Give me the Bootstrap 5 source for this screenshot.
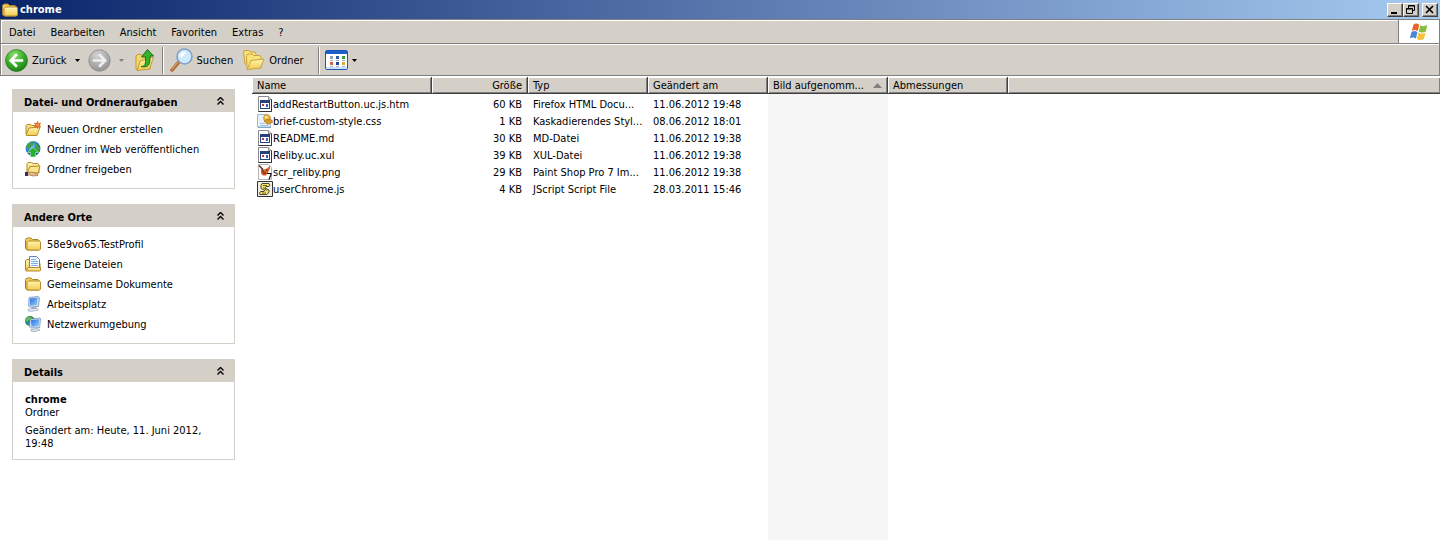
<!DOCTYPE html>
<html lang="de">
<head>
<meta charset="utf-8">
<meta name="viewport" content="width=device-width, initial-scale=1">
<title>chrome</title>
<link rel="stylesheet" href="https://cdn.jsdelivr.net/npm/bootstrap@5.3.0/dist/css/bootstrap.min.css">
<style>
  :root { --face: #d4d0c8; --shade: #808080; }
  body { font: 11px/13px Tahoma, "DejaVu Sans Condensed", "DejaVu Sans", sans-serif; color: #000; background: #fff; }
  button { font: inherit; color: inherit; background: none; border: 0; padding: 0; }
  a { color: inherit; text-decoration: none; }
  a:hover { text-decoration: underline; }
  svg { display: block; flex: none; }
  .titlebar { height: 19px; padding: 0 2px; color: #fff; background: linear-gradient(90deg, #0a246a, #a6caf0); }
  .titlebar h1 { font: inherit; font-weight: bold; margin: 0 0 0 2px; }
  .caption-btn { width: 16px; height: 14px; background: var(--face); border: 1px solid; border-color: #fff #404040 #404040 #fff; box-shadow: inset -1px -1px var(--shade); }
  .caption-btn:last-child { margin-left: 3px; }
  .bars { background: var(--face); border: 1px solid var(--shade); box-shadow: inset 1px 1px #fff; }
  .menubar { height: 24px; border-bottom: 1px solid var(--shade); }
  .menubar button { padding: 1px 7px 0 8px; }
  .flag { width: 41px; background: #fff; border-left: 1px solid var(--shade); }
  .tools { height: 31px; border-top: 1px solid #fff; padding-left: 4px; }
  .rule { width: 2px; height: 27px; margin: 0 5px 0 6px; border-left: 1px solid var(--shade); border-right: 1px solid #fff; }
  .tasks { width: 252px; padding: 13px 17px 13px 12px; gap: 15px; flex: none; }
  .panel { border: 1px solid var(--face); border-top: 0; }
  .panel-head { height: 23px; background: var(--face); padding: 0 10px 0 11px; }
  .panel-head h2 { font: inherit; font-weight: bold; }
  .panel-list { padding: 7px 12px 9px; }
  .panel-list a { height: 20px; gap: 6px; }
  .panel-info { padding: 11px 12px 9px; }
  .panel-info p { margin: 0; }
  .panel-info p:last-child { margin-top: 5px; }
  .files { padding-top: 1px; min-width: 0; background: linear-gradient(#f6f6f6, #f6f6f6) 516px 0 / 120px 100% no-repeat; }
  .grid { width: 100%; table-layout: fixed; border-collapse: separate; border-spacing: 0; }
  .grid th { height: 17px; padding: 1px 5px 0; font-weight: normal; background: var(--face); border-bottom: 1px solid #404040; border-right: 1px solid #404040; box-shadow: inset 1px 1px #fff, inset -1px -1px var(--shade); white-space: nowrap; }
  .grid th:last-child { border-right: 0; }
  .grid td { height: 17px; padding: 1px 0 0 5px; white-space: nowrap; }
  .grid td.text-end { padding-right: 6px; }
  .grid tbody tr:first-child td { height: 18px; padding-top: 2px; }
  .c-name { width: 180px; } .c-size { width: 96px; } .c-mid { width: 120px; }
</style>
<script src="https://cdn.jsdelivr.net/npm/bootstrap@5.3.0/dist/js/bootstrap.bundle.min.js"></script>
</head>
<body class="min-vh-100 d-flex flex-column">

<svg width="0" height="0" class="position-absolute" aria-hidden="true">
  <defs>
    <linearGradient id="gy" x1="0" y1="0" x2="0" y2="1"><stop offset="0" stop-color="#fff6b4"/><stop offset="1" stop-color="#f2cb4e"/></linearGradient>
    <radialGradient id="gg" cx=".4" cy=".25" r=".8"><stop offset="0" stop-color="#8fe070"/><stop offset=".55" stop-color="#3bab2c"/><stop offset="1" stop-color="#167a12"/></radialGradient>
    <radialGradient id="gr" cx=".4" cy=".25" r=".8"><stop offset="0" stop-color="#d2d2d2"/><stop offset="1" stop-color="#909090"/></radialGradient>
    <linearGradient id="gb" x1="0" y1="0" x2="1" y2="1"><stop offset="0" stop-color="#2c6fd8"/><stop offset="1" stop-color="#8fd0fb"/></linearGradient>
    <radialGradient id="gw" cx=".35" cy=".3" r=".8"><stop offset="0" stop-color="#8fd2f5"/><stop offset=".5" stop-color="#2b82c9"/><stop offset="1" stop-color="#0c4a8c"/></radialGradient>
    <symbol id="folder" viewBox="0 0 16 16">
      <path d="M.5 12.500V3.500L2 2h4l1.500 1.500H13L14.500 5v8L13.500 14H2z" fill="#f0cd5c" stroke="#a8802a"/>
      <path d="M2 6.500 3.500 5H14.500L15.500 6v7L14.500 14H3L2 13z" fill="url(#gy)" stroke="#b58c2d"/>
    </symbol>
    <symbol id="openfolder" viewBox="0 0 16 16">
      <path d="M1 13V4.500L2 3.500h3.500L7 4.500h5l.500 1V8z" fill="#f5dc80" stroke="#b58c2d"/>
      <path d="M1 14 4 7 15 6l-3 8.500H2z" fill="url(#gy)" stroke="#b58c2d"/>
    </symbol>
    <symbol id="newfolder" viewBox="0 0 16 16">
      <use href="#openfolder"/>
      <path d="M12.500.5 13.300 2.600 15.500 2.200 14.300 4 15.500 5.900 13.300 5.500 12.500 7.500 11.700 5.500 9.500 5.900 10.700 4 9.500 2.200 11.700 2.600z" fill="#f28a3c" stroke="#d95c1e" stroke-width=".8"/>
    </symbol>
    <symbol id="webfolder" viewBox="0 0 16 16">
      <circle cx="8" cy="7.500" r="7.400" fill="url(#gw)"/>
      <path d="M3 3c2-2 5-2.500 6-2 1 1-1 2-1 3S5 6 4 7.500 1 7 1.500 5zM11 3c2 0 3.500 2.500 4 4.500l-1 4-2-1c-1-2-2.500-3-1-4.500z" fill="#3f9f45"/>
      <path d="M8 6.500 13.500 11.500H10.500V16H5.500V11.500H2.500z" fill="#25b02e" stroke="#c5ecba" stroke-width=".6"/>
    </symbol>
    <symbol id="sharefolder" viewBox="0 0 16 16">
      <path d="M2 12V2.500L3 1.500h3.500L8 2.500h5l1 2V12z" fill="url(#gy)" stroke="#b58c2d"/>
      <path d="M2.500 11 5 5.500 15 5l-2 7H3z" fill="#fbe68e" stroke="#b58c2d"/>
      <path d="M0 11.500h3l4-.5 5 1.500 1 2-5 .5-4-1H0z" fill="#e8b98a" stroke="#8a5a35" stroke-width=".6"/>
      <path d="M0 11h3v4H0z" fill="#2a3560"/>
    </symbol>
    <symbol id="docfolder" viewBox="0 0 16 16">
      <path d="M.5 14V4.500L2 3.500h3v4h10v7H2z" fill="url(#gy)" stroke="#a8802a"/>
      <path d="M4.500.500h7l3 3v8h-10z" fill="#f2f8ff" stroke="#5f86b8"/>
      <path d="M6 3.500h5M6 5.500h7M6 7.500h7M6 9.500h7" stroke="#7fb2e0"/>
      <path d="M1 15 3 11.500h12.500v3l-1 .5z" fill="url(#gy)" stroke="#b58c2d"/>
    </symbol>
    <symbol id="pc" viewBox="0 0 16 16">
      <path d="M4 1.500 13 .5l1.500 1-1 9-9 .5-1-1z" fill="#c9dcf2" stroke="#7a97bd" stroke-width=".8"/>
      <path d="M4.800 2.500 12.500 1.800l-.8 7.200-6.700.5z" fill="url(#gb)"/>
      <path d="M7 11h4l1 2H6z" fill="#a6b5cc"/>
      <path d="M3.500 13 12 12.300l1.500 1.700L6 15.500 3 14.500z" fill="#e9eef6" stroke="#8090aa" stroke-width=".6"/>
    </symbol>
    <symbol id="net" viewBox="0 0 16 16">
      <circle cx="5" cy="5" r="4.900" fill="#1d7a3c"/><path d="M1 3c2-3 5-3 6-2L4 4 2 6 .5 5z" fill="#62c45a"/><path d="M1 6l3-1 1 4-2 0z" fill="#2b82c9"/>
      <path d="M5 3 15 2l.6.600-1 8.900-9 .5-1-1z" fill="#d5e4f6" stroke="#6a87ad" stroke-width=".7"/>
      <path d="M6 4 14.300 3.300l-.8 7-7 .4z" fill="url(#gb)"/>
      <path d="M6 13.500 13 12.500l2 1.500-5 1.600-4-.6z" fill="#dfe6f0" stroke="#7f8fa8" stroke-width=".6"/>
    </symbol>
    <symbol id="up2" viewBox="0 0 7 8"><path d="M.5 3.500l3-3 3 3M.5 7.500l3-3 3 3" fill="none" stroke="#000" stroke-width="1.400"/></symbol>
    <symbol id="drop" viewBox="0 0 5 3"><path d="M0 0h5L2.500 3z"/></symbol>
    <symbol id="winfile" viewBox="0 0 16 16">
      <path d="M1.500.5h10l3 3v12h-13z" fill="#fff" stroke="#8c8c8c"/><path d="M11.500.5v3h3" fill="#ddd" stroke="#8c8c8c"/>
      <path d="M14.500 3.500v12h-13" fill="none" stroke="#333"/>
      <path d="M3 4h10v9H3z" fill="#26417f"/><path d="M4 7h8v5H4z" fill="#fff"/>
      <path d="M5 8h2v2H5z" fill="#c33b3b"/><path d="M9 8h2v3H9z" fill="#3e56c0"/>
    </symbol>
    <symbol id="cssfile" viewBox="0 0 16 16">
      <path d="M.5 1.500h10l3 3v9.500H.5z" fill="#e6f1fb" stroke="#9bb9d6"/><path d="M3 10.500h5M3 12.500h8" stroke="#a6c6e6"/>
      <path d="M1 14.500h13" stroke="#87a5c4"/>
      <circle cx="10" cy="5" r="3.500" fill="#f0b73c" stroke="#b9812a" stroke-width=".6"/><path d="M7 8l3-1.500 5 .5.5 2.500-5 2z" fill="#dc9a2d" stroke="#a66e1d" stroke-width=".6"/><circle cx="9.200" cy="4.300" r="1.200" fill="#fff2b5"/>
    </symbol>
    <symbol id="pngfile" viewBox="0 0 16 16">
      <path d="M1.500.5h10l3 3v12h-13z" fill="#fff" stroke="#b4b4b4"/>
      <path d="M4 5l3 .5 3-1 3-3 0 3-2 4-2 3-3 0-2-2z" fill="#dc5c27"/><path d="M5 7h2M9 6h1.500M6 9h3" stroke="#43201a"/>
      <path d="M10 9.500h4v1l-2 5" fill="none" stroke="#111" stroke-width="1.200"/><path d="M2 1.500l4 4" stroke="#5a2a1a" stroke-width="1.500"/>
    </symbol>
    <symbol id="jsfile" viewBox="0 0 16 16">
      <path d="M.5.5h15v15H.5z" fill="#efeee8" stroke="#333"/>
      <path d="M5 2.500h7l1 1.500-1 1.500H9L8 7l4 2v2l-2 2.500H3L2.500 12l1-1.500H7L8 9.500 4 7.500v-3z" fill="#f3e36b" stroke="#38351c" stroke-width=".9"/>
      <path d="M6 4.500h4M6 6.500l4 3M5 12h4" stroke="#38351c" stroke-width=".7"/>
    </symbol>
  </defs>
</svg>

<header>
  <div class="titlebar d-flex align-items-center">
    <svg width="16" height="16"><use href="#folder"/></svg>
    <h1 class="flex-grow-1">chrome</h1>
    <button class="caption-btn" aria-label="Minimieren"><svg width="14" height="12"><path d="M3 8h6v2H3z"/></svg></button>
    <button class="caption-btn" aria-label="Wiederherstellen"><svg width="14" height="12" fill="none" stroke="#000"><path d="M4.500 4V1.500h6v5H9M4 2h7M2.500 4.500h6v5h-6zM2 5h7"/></svg></button>
    <button class="caption-btn" aria-label="Schließen"><svg width="14" height="12"><path d="M3 2l7 7M10 2L3 9" stroke="#000" stroke-width="1.700"/></svg></button>
  </div>
  <div class="bars">
    <nav class="menubar d-flex align-items-stretch" aria-label="Menü">
      <button>Datei</button><button>Bearbeiten</button><button>Ansicht</button><button>Favoriten</button><button>Extras</button><button>?</button>
      <div class="flag ms-auto d-flex align-items-center justify-content-center">
        <svg width="20" height="20" viewBox="0 0 20 20">
          <path d="M4.500 2.500C6.500 1 8.500 1.500 10.300 2.800L8.700 9.200C6.700 7.800 5 7.800 2.800 9z" fill="#e8642c"/>
          <path d="M11.300 3.300c2 1.300 4.200 1.200 7-.2L16.800 9.500c-2.300 1.300-4.700 1.300-7 .1z" fill="#86bd3a"/>
          <path d="M2.500 10c2-1.200 4-1.200 6 .2L6.900 16.500C5 15.200 3 15 .8 16.200z" fill="#4a86d8"/>
          <path d="M9.500 10.700c2.200 1.200 4.500 1.200 7 0l-1.600 6.200c-2.300 1.300-4.800 1.400-7 .1z" fill="#f4c33a"/>
        </svg>
      </div>
    </nav>
    <div class="tools d-flex align-items-center" role="toolbar" aria-label="Symbolleiste">
      <button class="d-flex align-items-center gap-1">
        <svg width="23" height="23" viewBox="0 0 24 24"><circle cx="12" cy="12" r="11.400" fill="url(#gg)" stroke="#2a7a22" stroke-width=".8"/><path d="M12.500 5.500 6 12l6.500 6.500M6.500 12H19" fill="none" stroke="#fff" stroke-width="2.800"/></svg>Zurück
      </button>
      <button class="px-2" aria-label="Zurück-Verlauf"><svg width="5" height="3"><use href="#drop"/></svg></button>
      <button aria-label="Vorwärts"><svg width="23" height="23" viewBox="0 0 24 24"><circle cx="12" cy="12" r="11.200" fill="url(#gr)" stroke="#8c8c8c" stroke-width=".8"/><path d="M11.500 5.500 18 12l-6.500 6.500M17.500 12H5" fill="none" stroke="#eee" stroke-width="2.800"/></svg></button>
      <button class="px-2" aria-label="Vorwärts-Verlauf"><svg width="5" height="3" fill="#808080"><use href="#drop"/></svg></button>
      <button aria-label="Aufwärts">
        <svg width="24" height="24" viewBox="0 0 24 24"><path d="M4 21V8l1.500-1.500H9L11 8h7v13z" fill="#f3d76c" stroke="#c49a35"/><path d="M5 22.500 8 13l13.500-4-4 12z" fill="url(#gy)" stroke="#c49a35"/><path d="M9 18.500c4 0 5-2 4.500-9.500H9.500L15.500 1.500 21.500 8H18c.5 9-2 12-9 10.500z" fill="#36b32d" stroke="#17741a"/></svg>
      </button>
      <span class="rule"></span>
      <button class="d-flex align-items-center gap-1">
        <svg width="24" height="24" viewBox="0 0 24 24"><path d="M9 15 3 22" stroke="#b3713c" stroke-width="3.600" stroke-linecap="round"/><path d="M8.500 14.500 2.500 21.500" stroke="#e9b27d" stroke-width="1"/><circle cx="15.500" cy="8.500" r="7.500" fill="#cdeafc" stroke="#7f9fca" stroke-width="1.600"/><path d="M10.500 8a5 5 0 0 1 6-4l-1 3-3 3z" fill="#fff"/></svg>Suchen
      </button>
      <button class="d-flex align-items-center gap-1 ms-2 pe-2">
        <svg width="24" height="22" viewBox="-2 0 24 22"><path d="M2 15 .5 2.500L2 1.500h4L7.500 3H12l1 2v10z" fill="#fae27a" stroke="#c9a23c"/><path d="M4 19 3.500 6.500 5 5h4l1.500 1.500H17l1 2V19z" fill="#fae27a" stroke="#c9a23c"/><path d="M4 20.500 8 11.500l13-1.500-3.500 9z" fill="url(#gy)" stroke="#c9a23c"/></svg>Ordner
      </button>
      <span class="rule"></span>
      <button class="d-flex align-items-center gap-1" aria-label="Ansichten">
        <svg width="23" height="20" viewBox="0 0 23 20"><rect x=".5" y=".5" width="22" height="19" rx="1.500" fill="#fff" stroke="#1d56b4"/><path d="M1 1h21v3H1z" fill="#1b60c9"/><path d="M1 17h21v2H1z" fill="#cfe0f6"/>
          <path fill="#9aa0aa" d="M5 6h3v3H5z"/><path fill="#2f5fae" d="M11 6h3v3h-3z"/><path fill="#3c9a40" d="M17 6h3v3h-3z"/><path fill="#d9633a" d="M5 12h3v3H5z"/><path fill="#24498c" d="M11 12h3v3h-3z"/><path fill="#d8ab34" d="M17 12h3v3h-3z"/><path d="M5 10.500h3M11 10.500h3M17 10.500h3M5 16.500h3M11 16.500h3M17 16.500h3" stroke="#a8b4c4"/></svg>
        <svg width="5" height="3"><use href="#drop"/></svg>
      </button>
    </div>
  </div>
</header>

<main class="d-flex flex-grow-1">
  <aside class="tasks d-flex flex-column">
    <section class="panel">
      <div class="panel-head d-flex align-items-center justify-content-between"><h2 class="m-0 pt-1">Datei- und Ordneraufgaben</h2><button data-bs-toggle="collapse" data-bs-target="#p1" aria-label="Datei- und Ordneraufgaben einklappen"><svg width="7" height="8"><use href="#up2"/></svg></button></div>
      <div class="collapse show" id="p1"><div class="panel-list">
        <a href="#" class="d-flex align-items-center"><svg width="16" height="16"><use href="#newfolder"/></svg>Neuen Ordner erstellen</a>
        <a href="#" class="d-flex align-items-center"><svg width="16" height="16"><use href="#webfolder"/></svg>Ordner im Web veröffentlichen</a>
        <a href="#" class="d-flex align-items-center"><svg width="16" height="16"><use href="#sharefolder"/></svg>Ordner freigeben</a>
      </div></div>
    </section>
    <section class="panel">
      <div class="panel-head d-flex align-items-center justify-content-between"><h2 class="m-0 pt-1">Andere Orte</h2><button data-bs-toggle="collapse" data-bs-target="#p2" aria-label="Andere Orte einklappen"><svg width="7" height="8"><use href="#up2"/></svg></button></div>
      <div class="collapse show" id="p2"><div class="panel-list">
        <a href="#" class="d-flex align-items-center"><svg width="16" height="16"><use href="#folder"/></svg>58e9vo65.TestProfil</a>
        <a href="#" class="d-flex align-items-center"><svg width="16" height="16"><use href="#docfolder"/></svg>Eigene Dateien</a>
        <a href="#" class="d-flex align-items-center"><svg width="16" height="16"><use href="#folder"/></svg>Gemeinsame Dokumente</a>
        <a href="#" class="d-flex align-items-center"><svg width="16" height="16"><use href="#pc"/></svg>Arbeitsplatz</a>
        <a href="#" class="d-flex align-items-center"><svg width="16" height="16"><use href="#net"/></svg>Netzwerkumgebung</a>
      </div></div>
    </section>
    <section class="panel">
      <div class="panel-head d-flex align-items-center justify-content-between"><h2 class="m-0 pt-1">Details</h2><button data-bs-toggle="collapse" data-bs-target="#p3" aria-label="Details einklappen"><svg width="7" height="8"><use href="#up2"/></svg></button></div>
      <div class="collapse show" id="p3"><div class="panel-info">
        <p class="fw-bold">chrome</p><p>Ordner</p><p>Geändert am: Heute, 11. Juni 2012, 19:48</p>
      </div></div>
    </section>
  </aside>

  <div class="files flex-grow-1">
    <table class="grid">
      <colgroup><col class="c-name"><col class="c-size"><col class="c-mid"><col class="c-mid"><col class="c-mid"><col class="c-mid"><col></colgroup>
      <thead><tr><th>Name</th><th class="text-end">Größe</th><th>Typ</th><th>Geändert am</th>
        <th><div class="d-flex align-items-center justify-content-between"><span>Bild aufgenomm...</span><svg width="9" height="5" fill="#808080"><path d="M0 5h9L4.500 0z"/></svg></div></th>
        <th>Abmessungen</th><th></th></tr></thead>
      <tbody>
        <tr><td><div class="d-flex align-items-center"><svg width="16" height="16"><use href="#winfile"/></svg>addRestartButton.uc.js.htm</div></td><td class="text-end">60 KB</td><td>Firefox HTML Docu...</td><td>11.06.2012 19:48</td><td></td><td></td><td></td></tr>
        <tr><td><div class="d-flex align-items-center"><svg width="16" height="16"><use href="#cssfile"/></svg>brief-custom-style.css</div></td><td class="text-end">1 KB</td><td>Kaskadierendes Styl...</td><td>08.06.2012 18:01</td><td></td><td></td><td></td></tr>
        <tr><td><div class="d-flex align-items-center"><svg width="16" height="16"><use href="#winfile"/></svg>README.md</div></td><td class="text-end">30 KB</td><td>MD-Datei</td><td>11.06.2012 19:38</td><td></td><td></td><td></td></tr>
        <tr><td><div class="d-flex align-items-center"><svg width="16" height="16"><use href="#winfile"/></svg>Reliby.uc.xul</div></td><td class="text-end">39 KB</td><td>XUL-Datei</td><td>11.06.2012 19:38</td><td></td><td></td><td></td></tr>
        <tr><td><div class="d-flex align-items-center"><svg width="16" height="16"><use href="#pngfile"/></svg>scr_reliby.png</div></td><td class="text-end">29 KB</td><td>Paint Shop Pro 7 Im...</td><td>11.06.2012 19:38</td><td></td><td></td><td></td></tr>
        <tr><td><div class="d-flex align-items-center"><svg width="16" height="16"><use href="#jsfile"/></svg>userChrome.js</div></td><td class="text-end">4 KB</td><td>JScript Script File</td><td>28.03.2011 15:46</td><td></td><td></td><td></td></tr>
      </tbody>
    </table>
  </div>
</main>
</body>
</html>
